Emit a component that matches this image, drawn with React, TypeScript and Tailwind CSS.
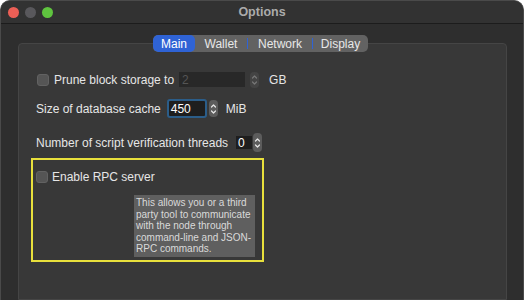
import React from "react";

function Spinner({ dim = false, h = 17 }: { dim?: boolean; h?: number }) {
  return (
    <div
      className={`flex flex-col items-center justify-center rounded-[4px] w-[9px] ${dim ? "bg-[#444444]" : "bg-[#5c5c5c]"}`}
      style={{ height: h }}
    >
      <svg width="7" height="14" viewBox="0 0 7 14" fill="none">
        <path d="M1.5 5 L3.5 3 L5.5 5" stroke={dim ? "#777" : "#e6e6e6"} strokeWidth="1.2" strokeLinecap="round" strokeLinejoin="round" />
        <path d="M1.5 9 L3.5 11 L5.5 9" stroke={dim ? "#777" : "#e6e6e6"} strokeWidth="1.2" strokeLinecap="round" strokeLinejoin="round" />
      </svg>
    </div>
  );
}

function Checkbox() {
  return <div className="w-[12px] h-[12px] rounded-[3px] bg-[#555555] border border-[#626262] shrink-0" />;
}

export default function App() {
  const font = { fontFamily: "'Liberation Sans', Arial, sans-serif" };
  return (
    <div className="w-[524px] h-[300px] bg-white overflow-hidden" style={font}>
      <div className="w-[524px] h-[300px] rounded-t-[10px] bg-[#2e2e2e] border border-[#4a4a4a] border-b-0 flex flex-col overflow-hidden">
        {/* title bar */}
        <div className="h-[23px] shrink-0 border-b border-[#1c1c1c] bg-[#323232] flex items-center relative">
          <div className="flex items-center gap-[6px] pl-[7px]">
            <div className="w-[11px] h-[11px] rounded-full bg-[#ec5f56]" />
            <div className="w-[11px] h-[11px] rounded-full bg-[#59585c]" />
            <div className="w-[11px] h-[11px] rounded-full bg-[#5fc43f]" />
          </div>
          <div className="absolute inset-0 flex items-center justify-center text-[12.5px] font-bold text-[#ababab]">Options</div>
        </div>
        {/* body */}
        <div className="flex-1 flex flex-col pl-[17px] pr-[16px] pt-[11px]">
          <div className="relative z-10 flex justify-center pr-[4px]">
            <div className="flex h-[17px] rounded-[5px] bg-[#626262] text-[12px] text-[#e8e8e8] items-stretch overflow-hidden">
              <div className="w-[42px] flex items-center justify-center bg-[#2f63d5] rounded-[5px] text-white">Main</div>
              <div className="w-[52px] flex items-center justify-center">Wallet</div>
              <div className="w-[1px] my-[3px] bg-[#2f63d5]" />
              <div className="w-[64px] flex items-center justify-center">Network</div>
              <div className="w-[1px] my-[3px] bg-[#2f63d5]" />
              <div className="w-[55px] flex items-center justify-center">Display</div>
            </div>
          </div>
          <div className="-mt-[9px] flex-1 bg-[#383838] border border-[#454545] rounded-t-[4px] pl-[17px] pt-[27px] text-[12px] text-[#e6e6e6]">
            <div className="flex items-center h-[17px]">
              <div className="ml-[1px]"><Checkbox /></div>
              <span className="ml-[5px]">Prune block storage to</span>
              <div className="ml-[5px] w-[66px] h-[15px] bg-[#282828] text-[#555555] flex items-center pl-[3px]">2</div>
              <div className="ml-[5px]"><Spinner dim h={16} /></div>
              <span className="ml-[10px]">GB</span>
            </div>
            <div className="flex items-center h-[19px] mt-[11px]">
              <span>Size of database cache</span>
              <div className="ml-[6px] w-[40px] h-[19px] bg-[#1e1e1e] border-2 border-[#2b5d89] rounded-[3px] flex items-center pl-[2px] text-white">450</div>
              <div className="ml-[2px]"><Spinner h={17} /></div>
              <span className="ml-[8px]">MiB</span>
            </div>
            <div className="flex items-center h-[19px] mt-[15px]">
              <span>Number of script verification threads</span>
              <div className="ml-[8px] w-[16px] h-[13px] bg-[#1e1e1e] flex items-center pl-[2px] text-white">0</div>
              <div className="ml-[1px]"><Spinner h={19} /></div>
            </div>
            <div className="mt-[6px] -ml-[5px] w-[233px] h-[104px] border-2 border-[#e8e03c] flex flex-col">
              <div className="flex items-center mt-[8px] ml-[3px]">
                <Checkbox />
                <span className="ml-[4px]">Enable RPC server</span>
              </div>
              <div className="ml-[101px] mt-[9px] w-[121px] bg-[#5f5f5f] text-[10px] leading-[11.5px] text-[#dadada] px-[2px] py-[2px]">
                This allows you or a third party tool to communicate with the node through command-line and JSON-RPC commands.
              </div>
            </div>
          </div>
        </div>
      </div>
    </div>
  );
}
